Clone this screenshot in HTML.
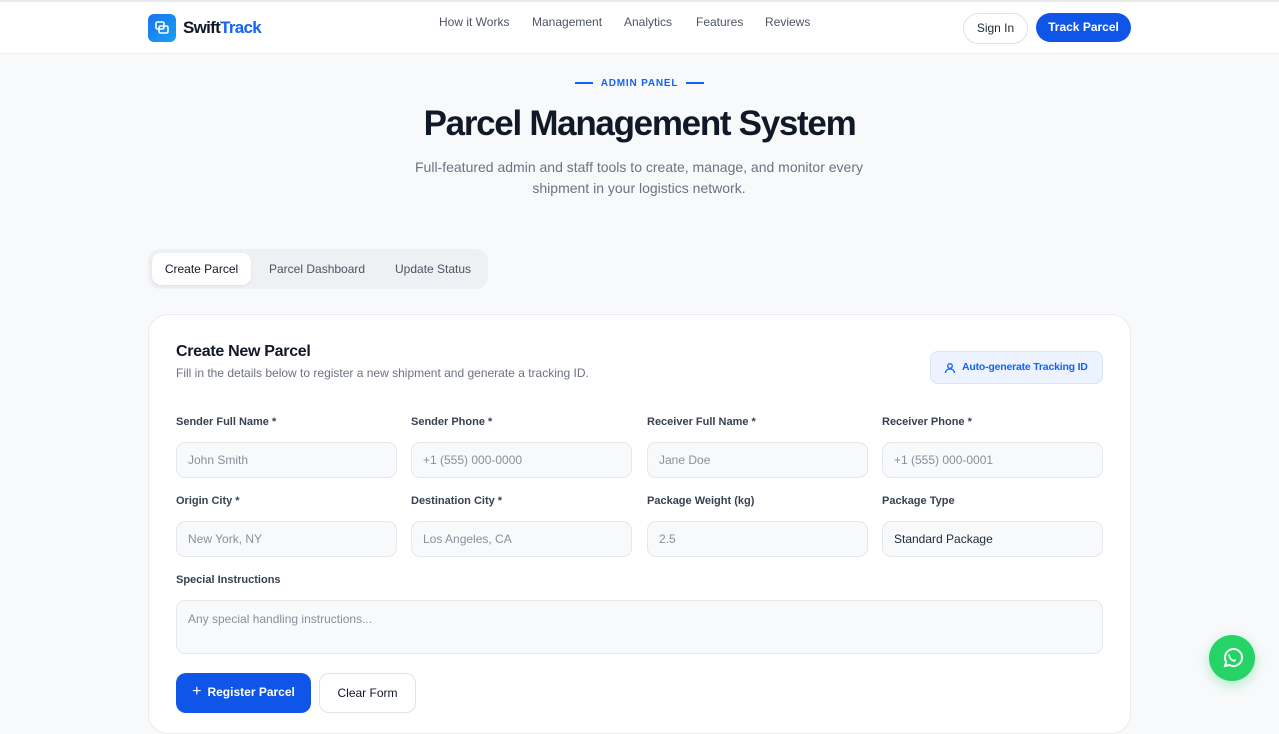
<!DOCTYPE html>
<html><head><style>
*{box-sizing:border-box;margin:0;padding:0}
body{width:1279px;height:701px;overflow:hidden;background:#f8f9fb;font-family:"Liberation Sans",sans-serif;color:#111827;position:relative}
.hdr{position:absolute;top:0;left:0;width:1279px;height:54px;background:#fff;border-top:2px solid #e8eaee;border-bottom:1px solid #eceef1}
.logo{position:absolute;left:148px;top:12px;width:28px;height:28px;border-radius:6px;background:linear-gradient(135deg,#1a73f0,#18a0f5)}
.brand{position:absolute;left:183px;top:16px;font-size:17px;font-weight:700;letter-spacing:-0.7px}
.brand span{color:#1463f3}
.nav{position:absolute;top:13px;font-size:12px;color:#4b5563}
.btn1{position:absolute;left:963px;top:11px;width:65px;height:31px;border:1px solid #dfe2e6;border-radius:16px;background:#fff;font-size:12px;text-align:center;line-height:29px;color:#1f2937}
.btn2{position:absolute;left:1036px;top:11px;width:95px;height:29px;border-radius:15px;background:#0f55e8;color:#fff;font-size:12px;font-weight:700;text-align:center;line-height:29px}
.eyebrow{position:absolute;top:78px;left:0;width:1279px;text-align:center;font-size:10px;font-weight:700;color:#1463f3;letter-spacing:0.8px}
.eyebrow:before,.eyebrow:after{content:"";display:inline-block;width:18px;height:2px;background:#1463f3;vertical-align:middle;margin:0 8px}
h1{position:absolute;top:104px;width:1279px;text-align:center;font-size:35px;font-weight:700;letter-spacing:-1.3px}
.sub{position:absolute;top:157px;left:390px;width:498px;text-align:center;font-size:14px;line-height:21px;color:#6b7280}
.tabs{position:absolute;left:148px;top:249px;width:340px;height:40px;border-radius:12px;background:#eef0f3}
.tab{position:absolute;top:4px;height:32px;line-height:32px;font-size:12px;color:#4b5563}
.tab.a{background:#fff;border-radius:9px;color:#111827;box-shadow:0 1px 2px rgba(0,0,0,.08);text-align:center}
.card{position:absolute;left:148px;top:314px;width:983px;height:420px;background:#fff;border:1px solid #eaecef;border-radius:20px}
.card h2{position:absolute;left:27px;top:28px;font-size:16px;font-weight:700;letter-spacing:-0.3px}
.card .d{position:absolute;left:27px;top:51px;font-size:12px;color:#6b7280}
.auto{position:absolute;left:781px;top:36px;width:173px;height:33px;border:1px solid #d6e5fb;background:#ecf3fe;border-radius:8px;color:#1463f3;font-size:10.5px;font-weight:700;line-height:31px;padding-left:31px;letter-spacing:-0.2px;white-space:nowrap}
.lbl{position:absolute;font-size:11px;font-weight:700;color:#374151}
.inp{position:absolute;width:221px;height:36px;border:1px solid #e5e7eb;background:#f8f9fa;border-radius:9px;font-size:12px;color:#8a9099;line-height:34px;padding-left:11px}
.reg{position:absolute;left:27px;top:358px;width:135px;height:40px;border-radius:10px;background:#0f55e8;color:#fff;font-size:12px;font-weight:700;line-height:38px;text-align:center}
.clr{position:absolute;left:170px;top:358px;width:97px;height:40px;border-radius:10px;border:1px solid #dfe2e6;font-size:12px;line-height:38px;text-align:center}
.wa{position:absolute;left:1209px;top:635px;width:46px;height:46px;border-radius:50%;background:#25d366;box-shadow:0 4px 12px rgba(37,211,102,.35)}
</style></head><body>
<div class="hdr">
<div class="logo"><svg width="28" height="28" viewBox="0 0 28 28" fill="none" stroke="#fff" stroke-width="1.6"><rect x="8" y="8" width="8" height="7" rx="1.5"/><rect x="11" y="12" width="9" height="7" rx="1.5"/></svg></div>
<div class="brand">Swift<span>Track</span></div>
<div class="nav" style="left:439px">How it Works</div>
<div class="nav" style="left:532px">Management</div>
<div class="nav" style="left:624px">Analytics</div>
<div class="nav" style="left:696px">Features</div>
<div class="nav" style="left:765px">Reviews</div>
<div class="btn1">Sign In</div>
<div class="btn2">Track Parcel</div>
</div>
<div class="eyebrow">ADMIN PANEL</div>
<h1>Parcel Management System</h1>
<div class="sub">Full-featured admin and staff tools to create, manage, and monitor every shipment in your logistics network.</div>
<div class="tabs">
<div class="tab a" style="left:4px;width:99px">Create Parcel</div>
<div class="tab" style="left:121px">Parcel Dashboard</div>
<div class="tab" style="left:247px">Update Status</div>
</div>
<div class="card">
<h2>Create New Parcel</h2>
<div class="d">Fill in the details below to register a new shipment and generate a tracking ID.</div>
<div class="auto"><svg style="position:absolute;left:13px;top:10px" width="12" height="12" viewBox="0 0 12 12" fill="none" stroke="#1463f3" stroke-width="1.3"><circle cx="6" cy="4" r="2.3"/><path d="M1.5 11c0-2.5 2-4 4.5-4s4.5 1.5 4.5 4"/></svg>Auto-generate Tracking ID</div>
<div class="lbl" style="left:27px;top:101px">Sender Full Name *</div>
<div class="lbl" style="left:262px;top:101px">Sender Phone *</div>
<div class="lbl" style="left:498px;top:101px">Receiver Full Name *</div>
<div class="lbl" style="left:733px;top:101px">Receiver Phone *</div>
<div class="inp" style="left:27px;top:127px">John Smith</div>
<div class="inp" style="left:262px;top:127px">+1 (555) 000-0000</div>
<div class="inp" style="left:498px;top:127px">Jane Doe</div>
<div class="inp" style="left:733px;top:127px">+1 (555) 000-0001</div>
<div class="lbl" style="left:27px;top:180px">Origin City *</div>
<div class="lbl" style="left:262px;top:180px">Destination City *</div>
<div class="lbl" style="left:498px;top:180px">Package Weight (kg)</div>
<div class="lbl" style="left:733px;top:180px">Package Type</div>
<div class="inp" style="left:27px;top:206px">New York, NY</div>
<div class="inp" style="left:262px;top:206px">Los Angeles, CA</div>
<div class="inp" style="left:498px;top:206px">2.5</div>
<div class="inp" style="left:733px;top:206px;color:#1f2937">Standard Package</div>
<div class="lbl" style="left:27px;top:259px">Special Instructions</div>
<div class="inp" style="left:27px;top:285px;width:927px;height:54px;line-height:18px;padding-top:9px">Any special handling instructions...</div>
<div class="reg"><span style="font-size:16px;font-weight:400;margin-right:6px">+</span>Register Parcel</div>
<div class="clr">Clear Form</div>
</div>
<div class="wa"><svg width="46" height="46" viewBox="0 0 46 46" fill="none" stroke="#fff" stroke-width="2"><path d="M16 31l1.3-4A8.5 8.5 0 1 1 20.5 30z"/><path d="M20 19.5c0 3 2.5 6 5.5 6.5l1-1.5" stroke-width="1.6"/></svg></div>
</body></html>
